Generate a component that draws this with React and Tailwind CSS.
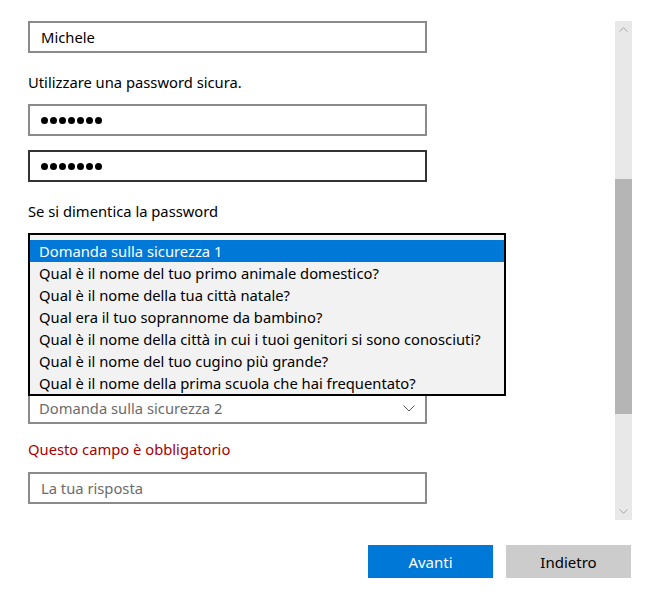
import React from 'react';

const questions = [
    'Qual è il nome del tuo primo animale domestico?',
    'Qual è il nome della tua città natale?',
    'Qual era il tuo soprannome da bambino?',
    'Qual è il nome della città in cui i tuoi genitori si sono conosciuti?',
    'Qual è il nome del tuo cugino più grande?',
    'Qual è il nome della prima scuola che hai frequentato?',
];

const Dots = () => (
    <div className="flex items-center gap-[2px]">
        {[0, 1, 2, 3, 4, 5, 6].map(i => (
            <span key={i} className="block w-[7px] h-[7px] rounded-full bg-black"></span>
        ))}
    </div>
);

const Chevron = ({ up, className }) => (
    <svg className={className} viewBox="0 0 12 7" fill="none" stroke="currentColor" strokeWidth="1">
        {up ? <path d="M0.5 6.5 L6 1 L11.5 6.5" /> : <path d="M0.5 0.5 L6 6 L11.5 0.5" />}
    </svg>
);

const App = () => {
    return (
        <div className="w-[653px] h-[600px] bg-white text-black font-['Segoe_UI','Noto_Sans',sans-serif] text-[14.75px] leading-[20px] overflow-hidden">
            <div className="flex pt-[21px] h-[520px]">
                {/* Form */}
                <div className="flex-1 pl-[28px]">
                    <div className="w-[399px] h-[32px] border-2 border-[#8a8a8a] flex items-center px-[11px]">Michele</div>

                    <p className="mt-[19px]">Utilizzare una password sicura.</p>

                    <div className="mt-[12px] w-[399px] h-[32px] border-2 border-[#8a8a8a] flex items-center px-[11px]">
                        <Dots />
                    </div>
                    <div className="mt-[14px] w-[399px] h-[32px] border-2 border-[#333333] flex items-center px-[11px]">
                        <Dots />
                    </div>

                    <p className="mt-[19px]">Se si dimentica la password</p>

                    {/* Security questions */}
                    <div className="relative mt-[12px]">
                        <div className="w-[399px] h-[32px] border-2 border-[#8a8a8a]"></div>
                        <div className="mt-[127px] w-[399px] h-[32px] border-2 border-[#8a8a8a] flex items-center justify-between pl-[9px] pr-[10px] text-[#6b6b6b]">
                            <span>Domanda sulla sicurezza 2</span>
                            <Chevron className="w-[12px] h-[7px] text-[#555]" />
                        </div>

                        {/* Open dropdown */}
                        <div className="absolute top-0 left-0 w-[478px] h-[163px] border-2 border-black bg-[#f2f2f2] pt-[5px] z-10">
                            <div className="h-[22px] bg-[#0078d7] text-white flex items-center px-[9px]">Domanda sulla sicurezza 1</div>
                            {questions.map(q => (
                                <div key={q} className="h-[22px] flex items-center px-[9px] whitespace-nowrap">{q}</div>
                            ))}
                        </div>
                    </div>

                    <p className="mt-[15px] text-[#a80000]">Questo campo è obbligatorio</p>

                    <div className="mt-[13px] w-[399px] h-[32px] border-2 border-[#8a8a8a] flex items-center px-[11px] text-[#6b6b6b]">La tua risposta</div>
                </div>

                {/* Scrollbar */}
                <div className="w-[17px] mr-[21px] bg-[#e8e8e8] flex flex-col items-center">
                    <div className="h-[17px] flex items-center justify-center">
                        <Chevron up className="w-[9px] h-[5px] text-[#888]" />
                    </div>
                    <div className="mt-[141px] w-full h-[235px] bg-[#b5b5b5]"></div>
                    <div className="flex-1"></div>
                    <div className="h-[17px] flex items-center justify-center">
                        <Chevron className="w-[9px] h-[5px] text-[#888]" />
                    </div>
                </div>
            </div>

            {/* Buttons */}
            <div className="flex justify-end gap-[13px] pr-[22px] mt-[25px] text-[15px]">
                <button className="w-[125px] h-[33px] bg-[#0078d7] text-white">Avanti</button>
                <button className="w-[125px] h-[33px] bg-[#cccccc] text-black">Indietro</button>
            </div>
        </div>
    );
};

export default App;
